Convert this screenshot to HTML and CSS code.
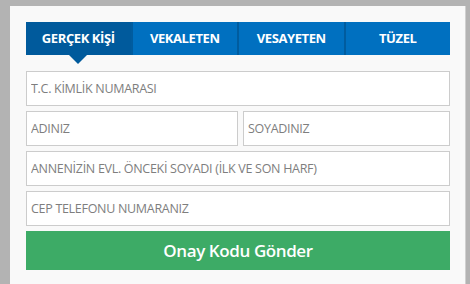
FILE: index.html
```html
<!doctype html>
<html lang="tr">
<head>
    <meta charset="UTF-8">
    <title>Başvuru</title>
    <link rel="stylesheet" href="styles.css">
</head>
<body>
<div class="panel">
    <ul class="tabs">
        <li class="active">GERÇEK KİŞİ</li>
        <li>VEKALETEN</li>
        <li>VESAYETEN</li>
        <li>TÜZEL</li>
    </ul>
    <form class="form">
        <input type="text" placeholder="T.C. KİMLİK NUMARASI">
        <div class="row">
            <input type="text" class="first-name" placeholder="ADINIZ">
            <input type="text" placeholder="SOYADINIZ">
        </div>
        <input type="text" placeholder="ANNENİZİN EVL. ÖNCEKİ SOYADI (İLK VE SON HARF)">
        <input type="text" placeholder="CEP TELEFONU NUMARANIZ">
        <button type="button" class="send-btn">Onay Kodu Gönder</button>
    </form>
</div>
</body>
</html>
```

FILE: styles.css
```css
*{
    padding: 0;
    margin: 0;
    box-sizing: border-box;
}
body{
    background-color: #b3b3b3;
    font-family: "Open Sans", "Liberation Sans", sans-serif;
}
ul li{
    list-style-type: none;
}

.panel{
    margin: 6px 4px 0 10px;
    padding: 16px 15px 20px 16px;
    background-color: #f9f9f9;
    border-right: 1px solid #d0d0d0;
    height: 290px;
}

.tabs{
    display: flex;
    height: 33px;
    background-color: #0070c0;
}
.tabs li{
    flex: 1;
    position: relative;
    text-align: center;
    line-height: 33px;
    font-size: 13px;
    font-weight: 700;
    letter-spacing: -0.4px;
    color: #ffffff;
    border-left: 2px solid #005c9f;
}
.tabs li:first-child{
    border-left: none;
}
.tabs .active{
    background-color: #005a9c;
}
.tabs .active:after{
    content: "";
    position: absolute;
    left: 50%;
    top: 33px;
    margin-left: -9px;
    border-left: 9px solid transparent;
    border-right: 9px solid transparent;
    border-top: 9px solid #005a9c;
}

.form{
    display: flex;
    flex-direction: column;
    gap: 5px;
    margin-top: 16px;
}
.form input{
    width: 100%;
    height: 35px;
    padding: 0 4px;
    border: 1px solid #cccccc;
    background: #ffffff;
    font-family: "Open Sans", "Liberation Sans", sans-serif;
    font-size: 12.5px;
    letter-spacing: -0.3px;
    color: #555555;
    outline: none;
}
.form input::placeholder{
    color: #7e7e7e;
}
.row{
    display: flex;
    gap: 5px;
}
.row .first-name{
    flex: 0 0 212px;
}
.send-btn{
    height: 39px;
    border: none;
    background-color: #3dab66;
    color: #ffffff;
    font-family: "Open Sans", "Liberation Sans", sans-serif;
    font-size: 17px;
    font-weight: 600;
    letter-spacing: -0.4px;
}
```
